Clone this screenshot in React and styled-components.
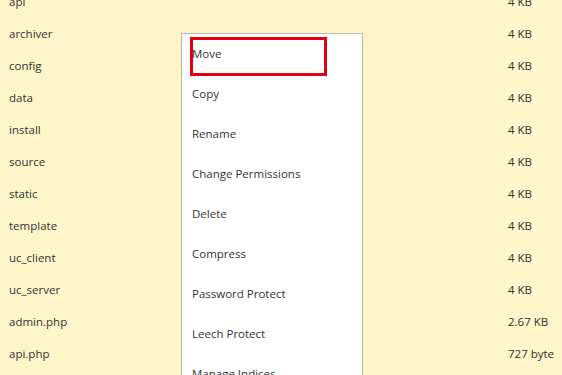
import React from 'react'
import styled, { createGlobalStyle } from 'styled-components'

const GlobalStyle = createGlobalStyle`
  html, body {
    margin: 0;
    padding: 0;
    background: #fef5c8;
    overflow: hidden;
  }
  body {
    font-family: 'Open Sans', 'Noto Sans', sans-serif;
  }
`

const Page = styled.div`
  position: relative;
  width: 562px;
  height: 375px;
  overflow: hidden;
  background: #fef5c8;
`

const FileList = styled.div`
  display: flex;
  flex-direction: column;
  margin-top: -15px;
`

const FileRow = styled.div`
  display: grid;
  grid-template-columns: 499px 1fr;
  align-items: center;
  height: 32px;
  padding-left: 9px;
  font-size: 11.5px;
  color: #333333;
`

const FileName = styled.span``

const FileSize = styled.span``

const Menu = styled.ul`
  position: absolute;
  left: 181px;
  top: 33px;
  width: 180px;
  margin: 0;
  padding: 0;
  list-style: none;
  background: #ffffff;
  border: 1px solid #bdb9a6;
`

const MenuItem = styled.li`
  height: 40px;
  display: flex;
  align-items: center;
  padding-left: 10px;
  padding-bottom: 2px;
  box-sizing: border-box;
  font-size: 11.5px;
  color: #333333;
`

const Highlight = styled.div`
  position: absolute;
  left: 190px;
  top: 37px;
  width: 131px;
  height: 33px;
  border: 3px solid #e3000f;
  pointer-events: none;
`

const files = [
  ['api', '4 KB'],
  ['archiver', '4 KB'],
  ['config', '4 KB'],
  ['data', '4 KB'],
  ['install', '4 KB'],
  ['source', '4 KB'],
  ['static', '4 KB'],
  ['template', '4 KB'],
  ['uc_client', '4 KB'],
  ['uc_server', '4 KB'],
  ['admin.php', '2.67 KB'],
  ['api.php', '727 byte'],
]

const actions = [
  'Move',
  'Copy',
  'Rename',
  'Change Permissions',
  'Delete',
  'Compress',
  'Password Protect',
  'Leech Protect',
  'Manage Indices',
]

export default function App() {
  return (
    <Page>
      <GlobalStyle />
      <FileList>
        {files.map(([name, size]) => (
          <FileRow key={name}>
            <FileName>{name}</FileName>
            <FileSize>{size}</FileSize>
          </FileRow>
        ))}
      </FileList>
      <Menu>
        {actions.map((a) => (
          <MenuItem key={a}>{a}</MenuItem>
        ))}
      </Menu>
      <Highlight />
    </Page>
  )
}
